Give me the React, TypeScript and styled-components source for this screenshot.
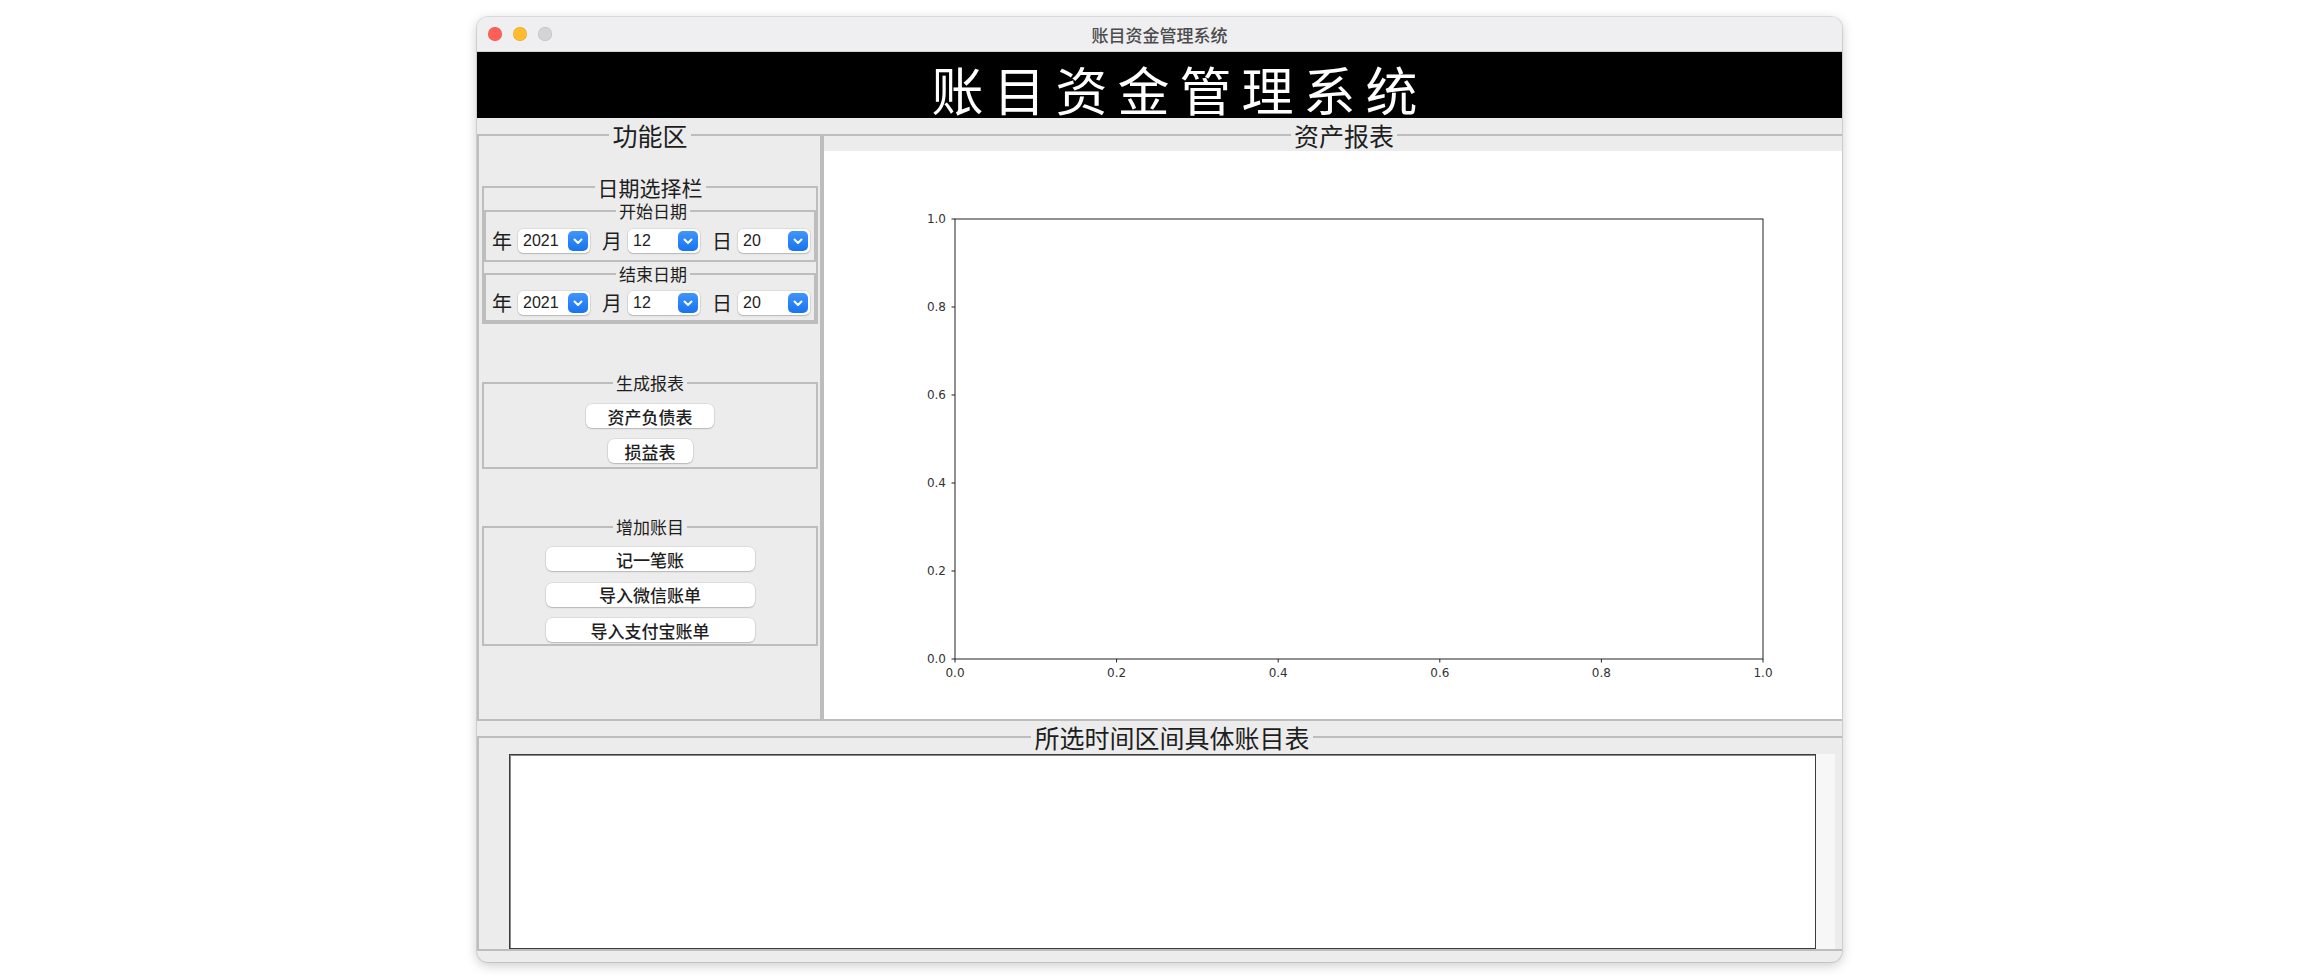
import React from "react";
import styled, { createGlobalStyle } from "styled-components";

const GlobalStyle = createGlobalStyle`
  html, body { margin: 0; padding: 0; background: #ffffff; }
  body { font-family: "Noto Sans CJK SC", "Noto Sans", sans-serif; }
  * { box-sizing: border-box; }
`;

const Page = styled.div`
  width: 2316px;
  height: 980px;
  padding: 17px 0 0 477px;
`;

const Window = styled.div`
  width: 1365px;
  height: 945px;
  border-radius: 11px;
  overflow: hidden;
  background: #ececec;
  box-shadow: 0 0 0 1px rgba(0, 0, 0, 0.1), 0 3px 12px rgba(0, 0, 0, 0.22);
  display: flex;
  flex-direction: column;
`;

const TitleBar = styled.div`
  height: 35px;
  flex-shrink: 0;
  display: grid;
  grid-template-columns: 1fr auto 1fr;
  align-items: center;
  background: #efeff1;
  border-bottom: 1px solid #d2d2d4;
`;

const Lights = styled.div`
  display: flex;
  gap: 11px;
  padding-left: 11px;
`;

const Light = styled.span<{ $color: string }>`
  width: 14px;
  height: 14px;
  border-radius: 50%;
  background: ${(p) => p.$color};
  box-shadow: inset 0 0 0 0.5px rgba(0, 0, 0, 0.12);
`;

const WindowTitle = styled.div`
  font-size: 17px;
  font-weight: 500;
  color: #4b4b4b;
  line-height: 1;
`;

const Header = styled.div`
  height: 66px;
  flex-shrink: 0;
  background: #000;
  color: #fff;
  display: flex;
  align-items: center;
  justify-content: center;
  padding: 7px 0 0 40px;
  font-size: 52px;
  font-weight: 400;
  letter-spacing: 10px;
  line-height: 1;
`;

const Main = styled.div`
  height: 603px;
  flex-shrink: 0;
  display: flex;
`;

const Frame = styled.fieldset`
  margin: 0;
  padding: 0;
  min-width: 0;
  min-inline-size: 0;
  border: 2px solid #bdbdbd;
`;

const Legend = styled.legend<{ $size: number }>`
  margin: 0 auto;
  padding: 0 3px;
  font-size: ${(p) => p.$size}px;
  line-height: ${(p) => p.$size + 1}px;
  color: #1e1e1e;
`;

const LeftPanel = styled(Frame)`
  width: 345px;
  flex-shrink: 0;
  margin-top: 4px;
  padding: 0 2px 0 3px;
`;

const RightPanel = styled(Frame)`
  width: 1044px;
  flex-shrink: 0;
  margin-top: 4px;
  padding-top: 3px;
`;

const DateGroup = styled(Frame)`
  margin-top: 28px;
`;

const SubGroup = styled(Frame)<{ $top: number; $pt: number; $pb: number }>`
  margin-top: ${(p) => p.$top}px;
  padding: ${(p) => p.$pt}px 0 ${(p) => p.$pb}px 6px;
`;

const DateRow = styled.div`
  display: flex;
  align-items: center;
  height: 24px;
`;

const UnitLabel = styled.span`
  flex-shrink: 0;
  font-size: 20px;
  line-height: 1;
  color: #1e1e1e;
  margin-right: 6px;
`;

const Select = styled.div`
  flex-shrink: 0;
  width: 72px;
  height: 24px;
  margin-right: 12px;
  border-radius: 5px;
  background: #fff;
  box-shadow: 0 0 0 0.5px rgba(0, 0, 0, 0.12), 0 1px 1.5px rgba(0, 0, 0, 0.18);
  display: flex;
  align-items: center;
  justify-content: space-between;
  padding: 0 2px 0 5px;
  &:last-child {
    margin-right: 0;
  }
`;

const SelectValue = styled.span`
  font-family: "Liberation Sans", Arial, sans-serif;
  font-size: 16px;
  color: #222;
`;

const SelectButton = styled.span`
  width: 20px;
  height: 20px;
  border-radius: 5px;
  background: linear-gradient(#3f95fb, #1874f0);
  display: flex;
  align-items: center;
  justify-content: center;
`;

const ActionGroup = styled(Frame)<{ $top: number }>`
  margin-top: ${(p) => p.$top}px;
`;

const ButtonStack = styled.div<{ $pt: number; $pb: number; $gap: number }>`
  display: flex;
  flex-direction: column;
  align-items: center;
  gap: ${(p) => p.$gap}px;
  padding: ${(p) => p.$pt}px 0 ${(p) => p.$pb}px;
`;

const Button = styled.button<{ $w: number }>`
  width: ${(p) => p.$w}px;
  height: 24px;
  border: none;
  border-radius: 6px;
  background: #fff;
  box-shadow: 0 0 0 0.5px rgba(0, 0, 0, 0.12), 0 1px 1.5px rgba(0, 0, 0, 0.18);
  font-family: "Noto Sans CJK SC", sans-serif;
  font-size: 17px;
  font-weight: 500;
  color: #1e1e1e;
  line-height: 1;
  padding: 0;
`;

const Canvas = styled.div`
  width: 1042px;
  height: 568px;
  background: #fff;
`;

const BottomFrame = styled(Frame)`
  width: 1390px;
  flex-shrink: 0;
  margin-top: 3px;
  padding: 4px 30px 0 30px;
`;

const TableRow = styled.div`
  display: flex;
  height: 195px;
`;

const TableBox = styled.div`
  width: 1309px;
  background: #fff;
  border: 1px solid #3c3c3c;
  box-shadow: inset 1px 1px 0 #8a8a8a;
`;

const ScrollStrip = styled.div`
  width: 19px;
  background: #f7f7f7;
`;

const Chevron = () => (
  <svg width="20" height="20" viewBox="0 0 20 20">
    <polyline
      points="6.5,8.5 10,12 13.5,8.5"
      fill="none"
      stroke="#fff"
      strokeWidth="2"
      strokeLinecap="round"
      strokeLinejoin="round"
    />
  </svg>
);

const DateSelect = ({ value }: { value: string }) => (
  <Select>
    <SelectValue>{value}</SelectValue>
    <SelectButton>
      <Chevron />
    </SelectButton>
  </Select>
);

const DateLine = () => (
  <DateRow>
    <UnitLabel>年</UnitLabel>
    <DateSelect value="2021" />
    <UnitLabel>月</UnitLabel>
    <DateSelect value="12" />
    <UnitLabel>日</UnitLabel>
    <DateSelect value="20" />
  </DateRow>
);

const ticks = [0, 0.2, 0.4, 0.6, 0.8, 1.0];
const AX = { x0: 131, x1: 939, y0: 68, y1: 508 };

const Chart = () => (
  <svg width="1042" height="568" viewBox="0 0 1042 568">
    <rect
      x={AX.x0}
      y={AX.y0}
      width={AX.x1 - AX.x0}
      height={AX.y1 - AX.y0}
      fill="none"
      stroke="#222"
      strokeWidth="1"
    />
    {ticks.map((t) => {
      const y = AX.y1 - t * (AX.y1 - AX.y0);
      return (
        <g key={"y" + t}>
          <line x1={AX.x0 - 3.5} x2={AX.x0} y1={y} y2={y} stroke="#222" strokeWidth="1" />
          <text
            x={AX.x0 - 9}
            y={y + 4.3}
            textAnchor="end"
            fontFamily="DejaVu Sans, sans-serif"
            fontSize="12"
            fill="#333"
          >
            {t.toFixed(1)}
          </text>
        </g>
      );
    })}
    {ticks.map((t) => {
      const x = AX.x0 + t * (AX.x1 - AX.x0);
      return (
        <g key={"x" + t}>
          <line x1={x} x2={x} y1={AX.y1} y2={AX.y1 + 3.5} stroke="#222" strokeWidth="1" />
          <text
            x={x}
            y={AX.y1 + 17.5}
            textAnchor="middle"
            fontFamily="DejaVu Sans, sans-serif"
            fontSize="12"
            fill="#333"
          >
            {t.toFixed(1)}
          </text>
        </g>
      );
    })}
  </svg>
);

export default function App() {
  return (
    <>
      <GlobalStyle />
      <Page>
        <Window>
          <TitleBar>
            <Lights>
              <Light $color="#fe5f57" />
              <Light $color="#febc2e" />
              <Light $color="#d4d4d6" />
            </Lights>
            <WindowTitle>账目资金管理系统</WindowTitle>
            <span />
          </TitleBar>
          <Header>账目资金管理系统</Header>
          <Main>
            <LeftPanel>
              <Legend $size={25}>功能区</Legend>
              <DateGroup>
                <Legend $size={21}>日期选择栏</Legend>
                <SubGroup $top={4} $pt={9} $pb={7}>
                  <Legend $size={17}>开始日期</Legend>
                  <DateLine />
                </SubGroup>
                <SubGroup $top={3} $pt={8} $pb={5}>
                  <Legend $size={17}>结束日期</Legend>
                  <DateLine />
                </SubGroup>
              </DateGroup>
              <ActionGroup $top={50}>
                <Legend $size={17}>生成报表</Legend>
                <ButtonStack $pt={12} $pb={4} $gap={11}>
                  <Button $w={128}>资产负债表</Button>
                  <Button $w={85}>损益表</Button>
                </ButtonStack>
              </ActionGroup>
              <ActionGroup $top={49}>
                <Legend $size={17}>增加账目</Legend>
                <ButtonStack $pt={11} $pb={2} $gap={11.5}>
                  <Button $w={209}>记一笔账</Button>
                  <Button $w={209}>导入微信账单</Button>
                  <Button $w={209}>导入支付宝账单</Button>
                </ButtonStack>
              </ActionGroup>
            </LeftPanel>
            <RightPanel>
              <Legend $size={25}>资产报表</Legend>
              <Canvas>
                <Chart />
              </Canvas>
            </RightPanel>
          </Main>
          <BottomFrame>
            <Legend $size={25}>所选时间区间具体账目表</Legend>
            <TableRow>
              <TableBox />
              <ScrollStrip />
            </TableRow>
          </BottomFrame>
        </Window>
      </Page>
    </>
  );
}
